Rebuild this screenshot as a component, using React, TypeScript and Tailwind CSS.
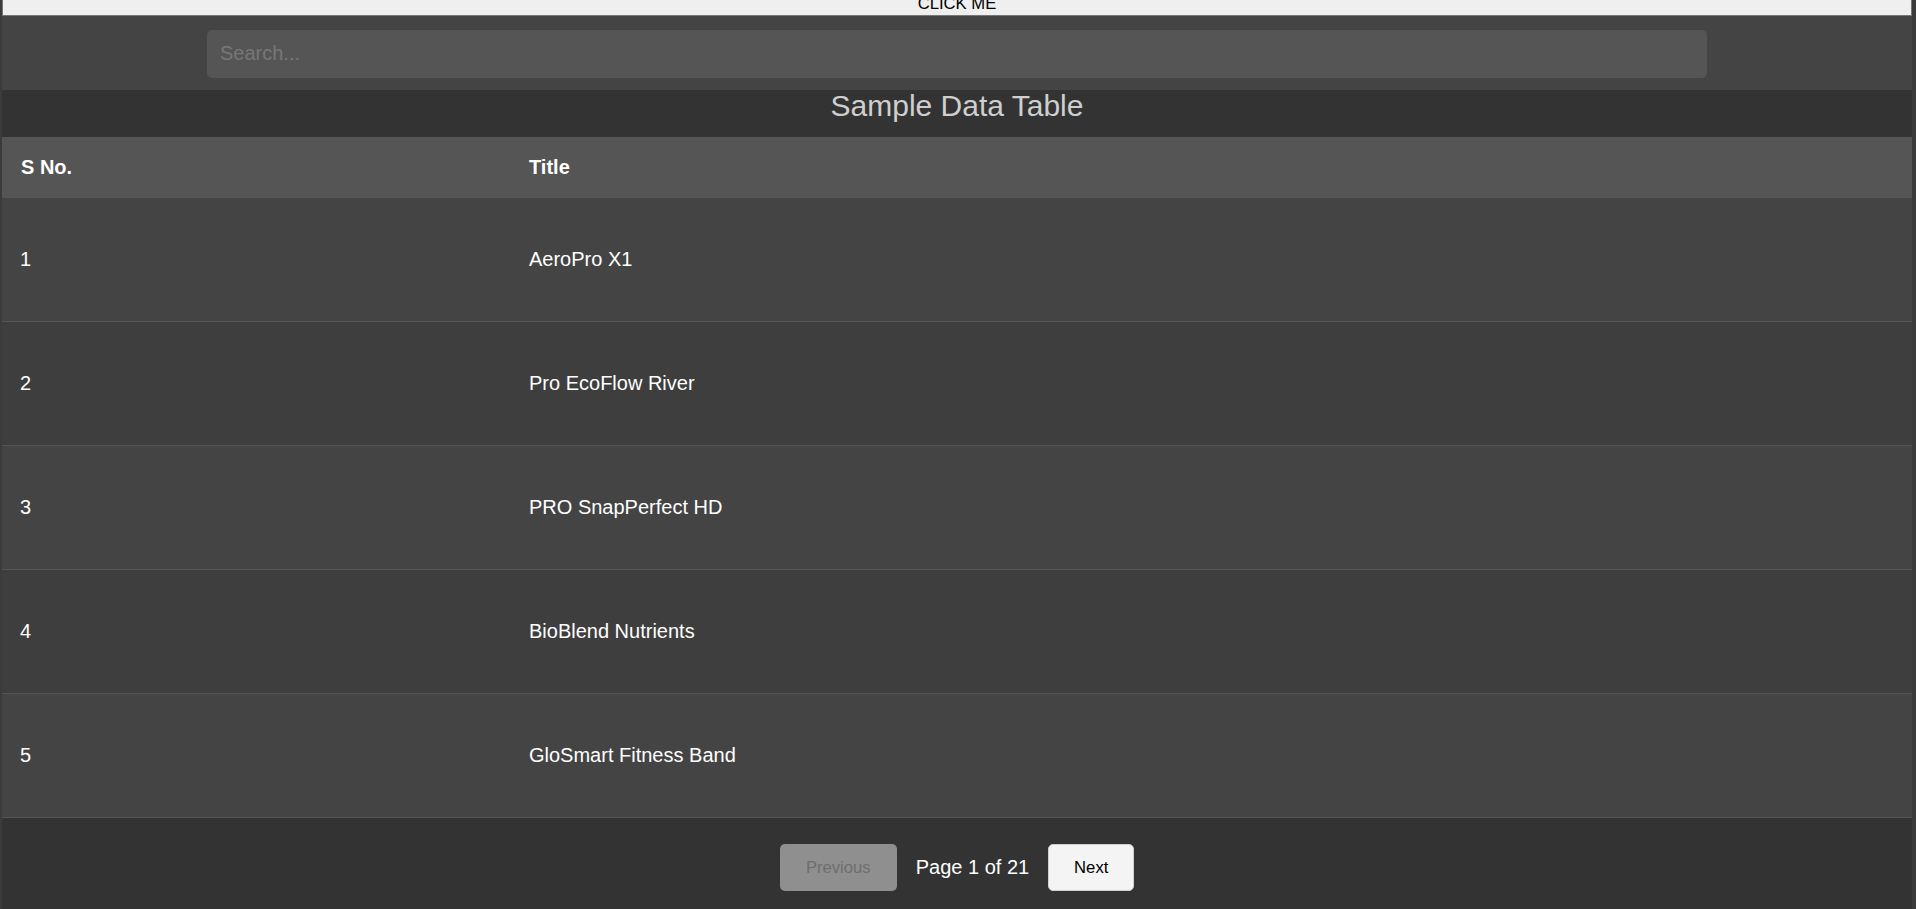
import { useState } from "react";

const rows = [
  { id: 1, title: "AeroPro X1" },
  { id: 2, title: "Pro EcoFlow River" },
  { id: 3, title: "PRO SnapPerfect HD" },
  { id: 4, title: "BioBlend Nutrients" },
  { id: 5, title: "GloSmart Fitness Band" },
];

export default function App() {
  const [query, setQuery] = useState("");

  return (
    <div className="h-screen overflow-hidden bg-[#3b3b3b] pl-[2px] pr-[4px] font-['Liberation_Sans',Arial,sans-serif]">
      {/* top button, page is scrolled a few px so the label is cut */}
      <button
        type="button"
        className="flex h-[16px] w-full items-start justify-center border-x border-b border-[#767676] bg-[#efefef] p-0 text-[16.67px] text-black"
      >
        <span className="block leading-[8.5px]">CLICK ME</span>
      </button>

      <div className="flex justify-center bg-[#444] pt-[14px] pb-[12px]">
        <input
          value={query}
          onChange={(e) => setQuery(e.target.value)}
          placeholder="Search..."
          className="h-[48px] w-[1500px] rounded-[5px] bg-[#555] px-[13px] pb-[2px] text-[20px] text-white outline-none placeholder:text-[#777]"
        />
      </div>

      <h2 className="h-[47px] bg-[#333] text-center text-[30px] leading-[32px] text-[#cfcfcf]">
        Sample Data Table
      </h2>

      <div className="flex h-[61px] items-center bg-[#555] pb-[2px] text-[20px] font-bold text-white">
        <div className="w-[509px] pl-[19px]">S No.</div>
        <div className="pl-[18px]">Title</div>
      </div>

      {rows.map((r, i) => (
        <div
          key={r.id}
          className={`flex h-[124px] items-center border-b border-[#555] pb-[2px] text-[20px] text-white ${
            i % 2 === 0 ? "bg-[#444]" : "bg-[#3e3e3e]"
          }`}
        >
          <div className="w-[509px] pl-[18px]">{r.id}</div>
          <div className="pl-[18px]">{r.title}</div>
        </div>
      ))}

      <div className="flex h-[91px] items-start justify-center gap-[19px] bg-[#333] pt-[26px]">
        <button
          type="button"
          disabled
          className="h-[47px] w-[117px] rounded-[5px] bg-[#8f8f8f] text-[16.67px] text-[#6e6e6e]"
        >
          Previous
        </button>
        <span className="text-[20px] leading-[47px] text-white">Page 1 of 21</span>
        <button
          type="button"
          className="h-[47px] w-[86px] rounded-[5px] border border-[#cfcfcf] bg-[#f4f4f4] text-[16.67px] text-black"
        >
          Next
        </button>
      </div>
    </div>
  );
}
